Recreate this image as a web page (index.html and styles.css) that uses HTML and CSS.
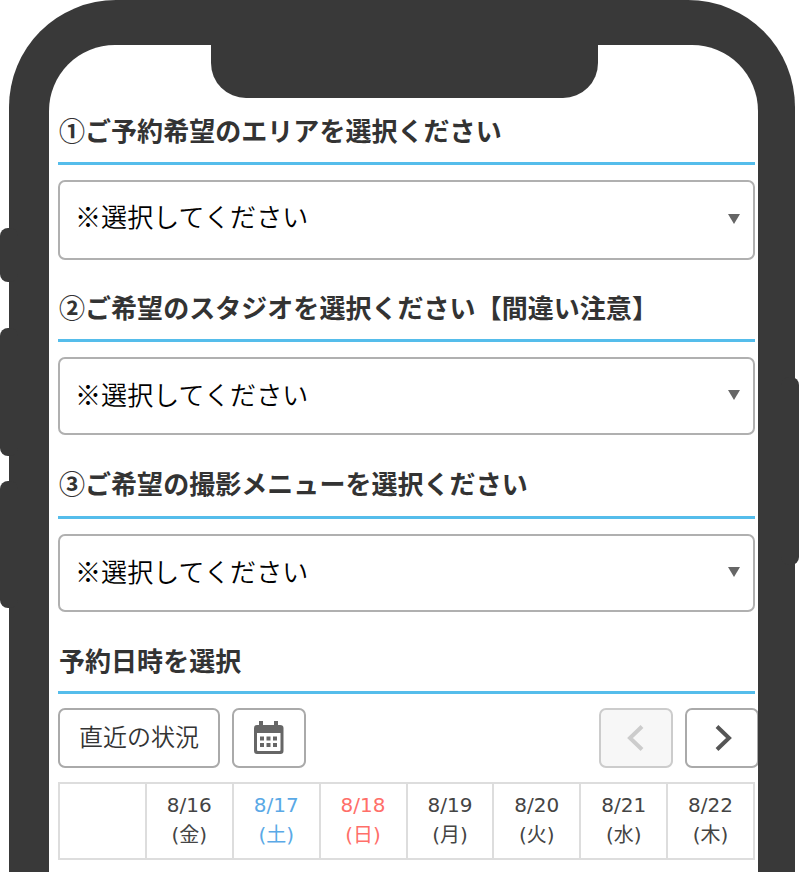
FILE: index.html
```html
<!DOCTYPE html>
<html lang="ja">
<head>
  <meta charset="UTF-8" />
  <meta name="viewport" content="width=device-width, initial-scale=1.0"/>
  <title>ご予約</title>
  <link rel="stylesheet" href="styles.css">
</head>
<body>
  <div class="phone">
    <span class="side-button mute"></span>
    <span class="side-button volume-up"></span>
    <span class="side-button volume-down"></span>
    <span class="side-button power"></span>
    <main class="screen">
      <div class="notch"></div>

      <section class="field area">
        <h2>①ご予約希望のエリアを選択ください</h2>
        <div class="select"><span>※選択してください</span><i class="caret"></i></div>
      </section>

      <section class="field studio">
        <h2>②ご希望のスタジオを選択ください【間違い注意】</h2>
        <div class="select"><span>※選択してください</span><i class="caret"></i></div>
      </section>

      <section class="field menu">
        <h2>③ご希望の撮影メニューを選択ください</h2>
        <div class="select"><span>※選択してください</span><i class="caret"></i></div>
      </section>

      <section class="schedule">
        <h2>予約日時を選択</h2>
        <div class="toolbar">
          <button type="button" class="btn recent">直近の状況</button>
          <button type="button" class="btn icon" aria-label="カレンダー">
            <svg width="32" height="36" viewBox="0 0 32 36">
              <path fill="#666" fill-rule="evenodd" d="M6 1h4v4h11V1h4v4h2q3.500 0 3.500 3v23q0 3-3 3H4q-3 0-3-3V8q0-3 3-3h2zM4 13v17q0 1 1 1h21.500q1 0 1-1V13z"/>
              <path fill="#666" d="M7 16.500h4v4H7zm6.500 0h4v4h-4zm6.500 0h4v4h-4zM7 23h4v4H7zm6.500 0h4v4h-4zm6.500 0h4v4h-4z"/>
            </svg>
          </button>
          <button type="button" class="btn icon prev" aria-label="前へ" disabled>
            <svg width="20" height="30" viewBox="0 0 20 30">
              <path d="M16 3.500 4 15l12 11.500" fill="none" stroke="#ccc" stroke-width="4"/>
            </svg>
          </button>
          <button type="button" class="btn icon next" aria-label="次へ">
            <svg width="20" height="30" viewBox="0 0 20 30">
              <path d="M5 3.500 17 15 5 26.500" fill="none" stroke="#555" stroke-width="4"/>
            </svg>
          </button>
        </div>
        <table class="calendar">
          <tr>
            <th></th>
            <th>8/16<br>(金)</th>
            <th class="sat">8/17<br>(土)</th>
            <th class="sun">8/18<br>(日)</th>
            <th>8/19<br>(月)</th>
            <th>8/20<br>(火)</th>
            <th>8/21<br>(水)</th>
            <th>8/22<br>(木)</th>
          </tr>
        </table>
      </section>
    </main>
  </div>
</body>
</html>
```
FILE: styles.css
```css
* {
  box-sizing: border-box;
}
body {
  margin: 0;
  height: 100vh;
  overflow: hidden;
  background: #fff;
  color: #333;
  font-family: "Noto Sans CJK JP", sans-serif;
}
.phone {
  position: relative;
  width: 786px;
  height: 100vh;
  margin-left: 9px;
  padding: 45px 37.5px 0 40px;
  background: #393939;
  border-radius: 107px 107px 0 0;
}
.side-button {
  position: absolute;
  left: -9px;
  width: 18px;
  background: #393939;
  border-radius: 8px;
}
.mute {
  top: 228px;
  height: 54px;
}
.volume-up {
  top: 328px;
  height: 128px;
}
.volume-down {
  top: 481px;
  height: 127px;
}
.power {
  top: 377px;
  left: auto;
  right: -4px;
  height: 188px;
}
.screen {
  height: 100%;
  padding: 0 0 0 9px;
  background: #fff;
  border-radius: 66px 66px 0 0;
  overflow: hidden;
}
.notch {
  width: 387px;
  height: 53px;
  margin-left: 153px;
  background: #393939;
  border-radius: 0 0 35px 35px;
}
.field,
.schedule {
  width: 697px;
}
h2 {
  height: 53px;
  margin: 0;
  padding-left: 1px;
  border-bottom: 3px solid #55bdeb;
  font-size: 26px;
  font-weight: bold;
  letter-spacing: 0.04px;
  line-height: 33px;
  white-space: nowrap;
}
.area {
  padding-top: 15px;
  height: 191px;
}
.area h2 {
  height: 52px;
}
.studio h2 {
  line-height: 35px;
}
.schedule h2 {
  height: 51px;
}
.studio,
.menu {
  height: 177px;
}
.select {
  display: flex;
  align-items: center;
  justify-content: space-between;
  height: 78px;
  margin-top: 15px;
  padding: 0 13px 5px 15px;
  border: 2px solid #b0b0b0;
  border-radius: 7px;
  color: #000;
  font-size: 26px;
  font-weight: 350;
  letter-spacing: 0.1px;
}
.area .select {
  height: 80px;
  padding-bottom: 9px;
}
.caret {
  margin-top: 3px;
  border-top: 10px solid #666;
  border-left: 6px solid transparent;
  border-right: 6px solid transparent;
}
.area .caret {
  margin-top: 7px;
}
.toolbar {
  display: flex;
  width: 700px;
  margin-top: 14px;
}
.btn {
  display: flex;
  align-items: center;
  justify-content: center;
  height: 60px;
  padding: 0 0 1px;
  border: 2px solid #aaa;
  border-radius: 7px;
  background: #fff;
  color: #333;
  font-family: inherit;
  font-size: 24px;
  font-weight: 350;
}
.recent {
  width: 162px;
  margin-right: 12px;
  padding-bottom: 6px;
}
.icon {
  width: 74px;
}
.prev {
  margin-left: auto;
  margin-right: 12px;
  border-color: #ccc;
  background: #f7f7f7;
}
.next {
  margin-right: -1px;
}
.calendar {
  width: 697px;
  height: 78px;
  margin-top: 14px;
  border-collapse: collapse;
  table-layout: fixed;
}
.calendar th {
  padding: 0 0 2px;
  border: 2px solid #ddd;
  color: #444;
  font-family: "DejaVu Sans", "Noto Sans CJK JP", sans-serif;
  font-size: 20px;
  font-weight: normal;
  line-height: 30px;
}
.calendar .sat {
  color: #5aa9e6;
}
.calendar .sun {
  color: #ff6f69;
}
```
